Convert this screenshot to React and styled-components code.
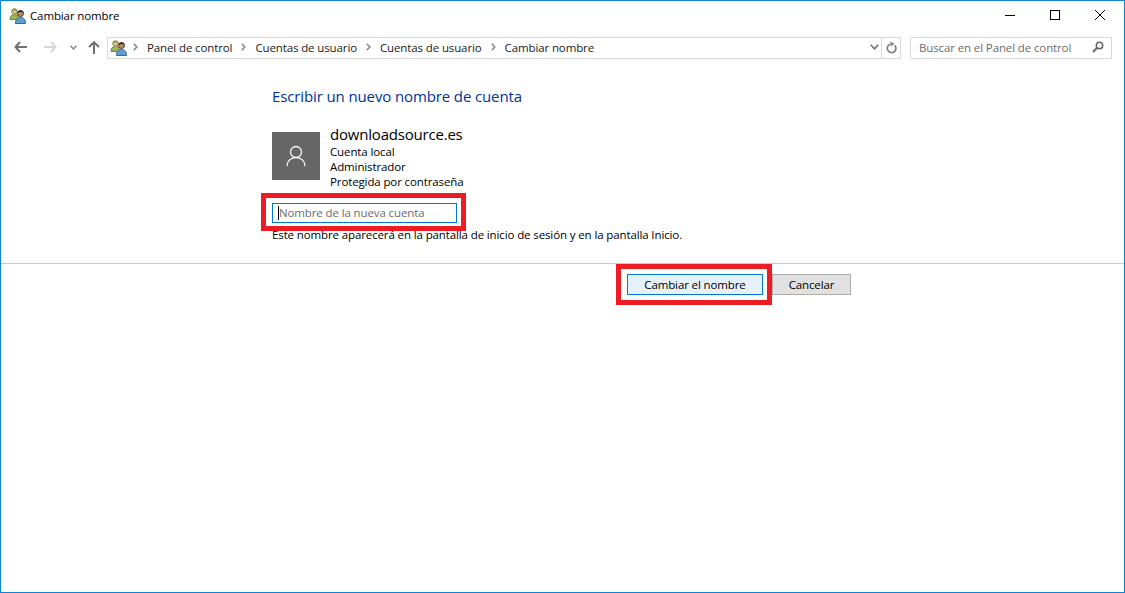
import React from "react";
import styled, { createGlobalStyle } from "styled-components";

const Global = createGlobalStyle`
  html, body { margin: 0; padding: 0; background: #fff; }
  body { font-family: "Open Sans", "Noto Sans", sans-serif; }
`;

const smallText = `
  font-size: 11.5px; letter-spacing: -0.12px;
`;

const Win = styled.div`
  width: 1125px; height: 593px; box-sizing: border-box;
  border: 1px solid #0a84d8; background: #fff; overflow: hidden;
  display: flex; flex-direction: column;
  color: #000;
`;
const TitleBar = styled.div`
  height: 30px; display: flex; align-items: center; padding: 0 0 2px 8px; box-sizing: border-box; flex: none;
`;
const TitleText = styled.span`
  ${smallText} margin-left: 3px; color: #000;
`;
const WinButtons = styled.div`
  margin-left: auto; margin-right: 2px; display: flex; height: 30px; align-items: center;
`;
const WinButton = styled.div`
  width: 45px; height: 30px; display: flex; align-items: center; justify-content: center;
`;
const NavBar = styled.div`
  height: 22px; display: flex; align-items: center; flex: none; margin-top: 6px;
`;
const NavIcons = styled.div`
  width: 106px; display: flex; align-items: center; margin-bottom: 2px;
`;
const NavSlot = styled.div`
  width: ${p => p.$w}px; display: flex; justify-content: center;
`;
const AddressBox = styled.div`
  width: 794px; height: 22px; box-sizing: border-box; border: 1px solid #d9d9d9;
  display: flex; align-items: center; padding: 0 0 2px 2px;
`;
const BreadcrumbGap = styled.span`
  width: 5px; flex: none;
`;
const Crumb = styled.span`
  ${smallText} color: #1a1a1a; margin: 0 9px; white-space: nowrap;
`;
const AddressEnd = styled.div`
  margin-left: auto; display: flex; align-items: center; height: 100%;
`;
const RefreshSlot = styled.div`
  width: 19px; height: 20px; border-left: 1px solid #d9d9d9; display: flex; align-items: center; justify-content: center;
  margin-top: 2px; padding-bottom: 2px; box-sizing: border-box;
`;
const DropSlot = styled.div`
  width: 14px; display: flex; align-items: center; justify-content: center;
`;
const SearchBox = styled.div`
  width: 202px; height: 22px; box-sizing: border-box; margin-left: 9px; border: 1px solid #d9d9d9;
  display: flex; align-items: center; justify-content: space-between; padding: 0 7px 2px 8px;
  ${smallText} color: #6d6d6d;
`;
const Upper = styled.div`
  height: 205px; flex: none; border-bottom: 1px solid #c8c8c8; padding: 0 0 0 271px; box-sizing: border-box;
  display: flex; flex-direction: column;
`;
const Heading = styled.h1`
  margin: 27px 0 0; font-size: 15px; letter-spacing: -0.12px; font-weight: 400; line-height: 20px; color: #003399;
`;
const Account = styled.div`
  display: flex; margin-top: 18px; gap: 10px;
`;
const Avatar = styled.div`
  width: 48px; height: 48px; background: #666; display: flex; align-items: center; justify-content: center; margin-top: 8px;
`;
const AccountInfo = styled.div`
  display: flex; flex-direction: column;
`;
const AccountName = styled.div`
  font-size: 15px; letter-spacing: -0.2px; line-height: 20px;
`;
const InfoLine = styled.div`
  ${smallText} line-height: 15px;
`;
const Highlight = styled.div`
  box-sizing: border-box; border: 5px solid #ed1c24; background: #fff; flex: none;
`;
const FieldHighlight = styled(Highlight)`
  width: 205px; height: 38px; margin: 4px 0 0 -11px; padding: 5px 0 0 6px;
`;
const Field = styled.div`
  width: 185px; height: 20px; box-sizing: border-box; border: 1px solid #0078d7;
  display: flex; align-items: center; padding: 0 0 2px 5px; ${smallText} color: #6d6d6d;
  &::before { content: ""; width: 1px; height: 14px; background: #000; margin-top: 2px; }
`;
const Hint = styled.div`
  ${smallText} line-height: 15px; margin-top: -4px; color: #000;
`;
const Actions = styled.div`
  display: flex; padding-left: 615px; align-items: flex-start;
`;
const ButtonHighlight = styled(Highlight)`
  width: 156px; height: 41px; padding: 5px 0 0 6px;
`;
const PrimaryButton = styled.button`
  width: 136px; height: 21px; box-sizing: border-box; border: 1px solid #0078d7; background: #e5f1fb;
  font-family: "Open Sans", sans-serif; ${smallText} color: #000; padding: 0; display: block;
`;
const SecondaryButton = styled.button`
  width: 79px; height: 21px; box-sizing: border-box; border: 1px solid #adadad; background: #e1e1e1;
  font-family: "Open Sans", sans-serif; ${smallText} color: #000; padding: 0; margin-top: 10px;
`;

const Users = () => (
  <svg width="18" height="17" viewBox="0 0 18 17">
    <path d="M1 12.500c0-3.500 1.500-5 4.500-5s4 1.500 4 5z" fill="#9db45a" stroke="#6a8a3a" />
    <circle cx="5.500" cy="4.500" r="2.800" fill="#dcc08c" stroke="#8c8a50" />
    <path d="M2.700 4c.3-2.500 5-2.800 5.600 0-1.800-1-3.800-1-5.600 0z" fill="#8f8a46" />
    <path d="M6.500 16.500c0-4 1.800-6 5-6s5 2 5 6z" fill="#5f9fd6" stroke="#2f6a9f" />
    <circle cx="11.500" cy="6.500" r="3" fill="#b98a62" stroke="#4a3a2c" />
    <path d="M8.500 6c.2-3.200 5.800-3.200 6 0-2-1.200-4-1.200-6 0z" fill="#2f2a26" />
  </svg>
);
const Chevron = ({ c = "#8a8a8a" }) => (
  <svg width="5" height="8" viewBox="0 0 5 8"><path d="M.8 .8 L3.800 4 L.8 7.200" fill="none" stroke={c} strokeWidth="1.600" /></svg>
);

export default function App() {
  return (
    <>
      <Global />
      <Win>
        <TitleBar>
          <Users />
          <TitleText>Cambiar nombre</TitleText>
          <WinButtons>
            <WinButton><svg width="10" height="10"><path d="M0 5.500H10" stroke="#000" /></svg></WinButton>
            <WinButton><svg width="10" height="10"><rect x=".5" y=".5" width="9" height="9" fill="none" stroke="#000" /></svg></WinButton>
            <WinButton><svg width="10" height="10"><path d="M0 0L10 10M10 0L0 10" stroke="#000" /></svg></WinButton>
          </WinButtons>
        </TitleBar>
        <NavBar>
          <NavIcons>
            <NavSlot $w={39}><svg width="13" height="12" viewBox="0 0 13 12"><path d="M6 1L1.500 6L6 11M1.500 6H13" fill="none" stroke="#707070" strokeWidth="2" /></svg></NavSlot>
            <NavSlot $w={20}><svg width="13" height="12" viewBox="0 0 13 12"><path d="M7 1L11.500 6L7 11M11.500 6H0" fill="none" stroke="#d6d6d6" strokeWidth="2" /></svg></NavSlot>
            <NavSlot $w={26}><svg width="7" height="5" viewBox="0 0 7 5"><path d="M.5 .8L3.500 4L6.500 .8" fill="none" stroke="#8a8a8a" strokeWidth="1.500" /></svg></NavSlot>
            <NavSlot $w={16}><svg width="12" height="13" viewBox="0 0 12 13"><path d="M1 6L6 1.200L11 6M6 1.200V13" fill="none" stroke="#707070" strokeWidth="2" /></svg></NavSlot>
          </NavIcons>
          <AddressBox>
            <Users />
            <BreadcrumbGap />
            <Chevron />
            <Crumb>Panel de control</Crumb>
            <Chevron />
            <Crumb>Cuentas de usuario</Crumb>
            <Chevron />
            <Crumb>Cuentas de usuario</Crumb>
            <Chevron />
            <Crumb>Cambiar nombre</Crumb>
            <AddressEnd>
              <DropSlot><svg width="9" height="6" viewBox="0 0 9 6"><path d="M.7 .8L4.500 4.800L8.300 .8" fill="none" stroke="#6e6e6e" strokeWidth="1.500" /></svg></DropSlot>
              <RefreshSlot><svg width="11" height="13" viewBox="0 0 11 13"><path d="M8.700 4.300A4.300 4.300 0 1 1 4 3.300" fill="none" stroke="#808080" strokeWidth="1.700" /><path d="M4.500 0.500V5.500L8.500 3z" fill="#808080" /></svg></RefreshSlot>
            </AddressEnd>
          </AddressBox>
          <SearchBox>
            Buscar en el Panel de control
            <svg width="12" height="12" viewBox="0 0 12 12"><circle cx="7.500" cy="4.500" r="3.200" fill="none" stroke="#666" strokeWidth="1.500" /><path d="M5 7L1 11" stroke="#666" strokeWidth="2" /></svg>
          </SearchBox>
        </NavBar>
        <Upper>
          <Heading>Escribir un nuevo nombre de cuenta</Heading>
          <Account>
            <Avatar>
              <svg width="20" height="22" viewBox="0 0 20 22"><circle cx="10" cy="7" r="5.500" fill="none" stroke="#fff" strokeWidth="1.300" /><path d="M1 21c0-5 4-8.500 9-8.500s9 3.500 9 8.500" fill="none" stroke="#fff" strokeWidth="1.300" /></svg>
            </Avatar>
            <AccountInfo>
              <AccountName>downloadsource.es</AccountName>
              <InfoLine>Cuenta local</InfoLine>
              <InfoLine>Administrador</InfoLine>
              <InfoLine>Protegida por contraseña</InfoLine>
            </AccountInfo>
          </Account>
          <FieldHighlight>
            <Field>Nombre de la nueva cuenta</Field>
          </FieldHighlight>
          <Hint>Este nombre aparecerá en la pantalla de inicio de sesión y en la pantalla Inicio.</Hint>
        </Upper>
        <Actions>
          <ButtonHighlight>
            <PrimaryButton>Cambiar el nombre</PrimaryButton>
          </ButtonHighlight>
          <SecondaryButton>Cancelar</SecondaryButton>
        </Actions>
      </Win>
    </>
  );
}
